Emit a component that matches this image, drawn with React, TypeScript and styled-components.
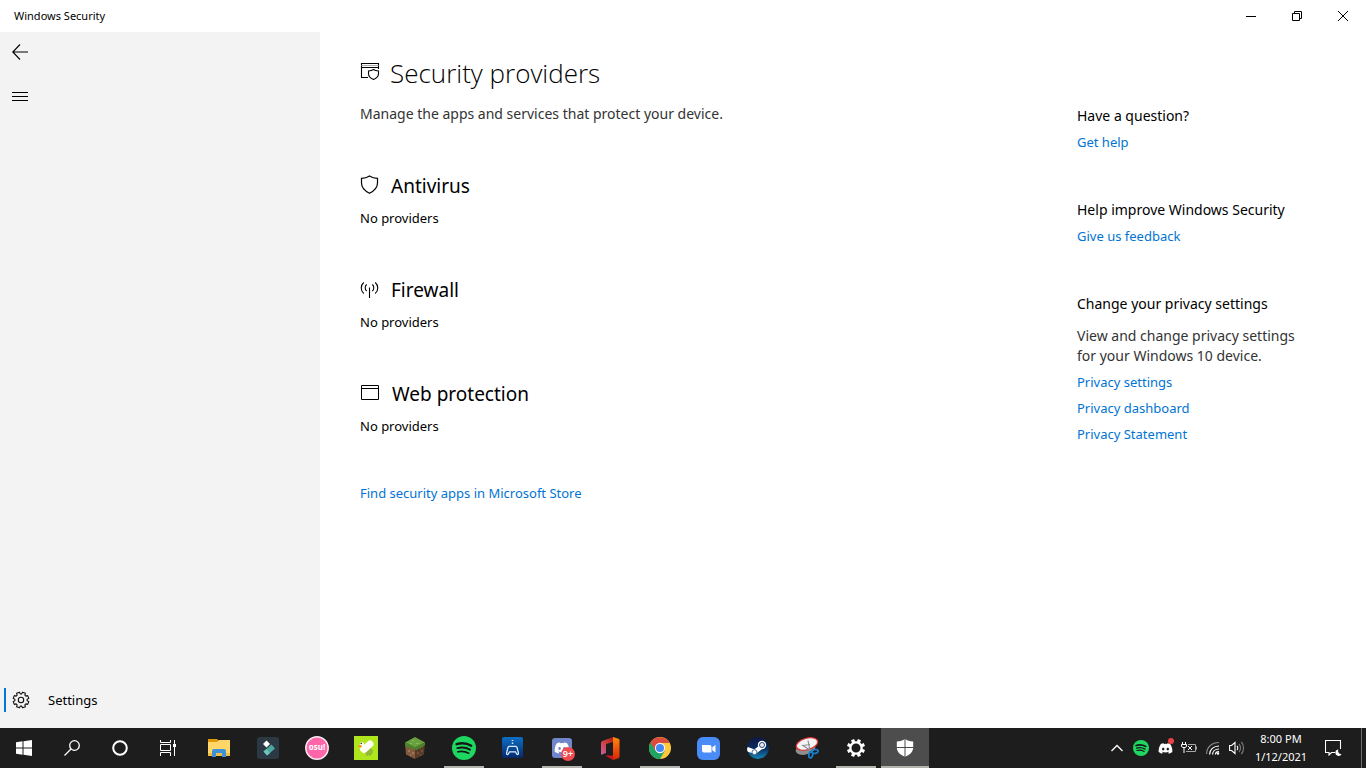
import React from "react";
import styled, { createGlobalStyle } from "styled-components";
import { FaDiscord } from "react-icons/fa";

const Global = createGlobalStyle`
  * { box-sizing: border-box; }
  body { margin: 0; background: #fff; font-family: "Noto Sans", "Open Sans", sans-serif; color: #000; }
  h1, h2, h3, p { margin: 0; font-weight: 400; }
  button { border: 0; padding: 0; background: none; color: inherit; font: inherit; cursor: pointer; }
  svg { display: block; flex: none; }
`;

const Page = styled.div`
  min-height: 100vh;
  display: flex;
  flex-direction: column;
`;
const TitleBar = styled.header`
  height: 32px;
  display: flex;
  align-items: center;
  justify-content: space-between;
  padding-left: 14px;
  font-size: 11px;
  line-height: 16px;
`;
const WindowControls = styled.div`
  display: flex;
`;
const WindowButton = styled.button`
  width: 46px;
  height: 32px;
  display: grid;
  place-items: center;
`;
const Body = styled.div`
  flex: 1;
  display: flex;
`;
const Sidebar = styled.nav`
  width: 320px;
  flex: none;
  background: #f3f3f3;
  display: flex;
  flex-direction: column;
  gap: 4px;
  padding-bottom: 8px;
`;
const NavButton = styled.button`
  width: 40px;
  height: 40px;
  display: grid;
  place-items: center;
`;
const SettingsButton = styled.button`
  margin-top: auto;
  height: 40px;
  padding-left: 4px;
  display: flex;
  align-items: center;
  font-size: 13px;
  line-height: 20px;
`;
const Indicator = styled.span`
  width: 2px;
  height: 24px;
  background: #0078d7;
  margin-right: 6px;
`;
const SettingsLabel = styled.span`
  margin-left: 18px;
`;
const Main = styled.main`
  flex: 1;
  padding: 20px 40px 40px;
`;
const PageTitle = styled.h1`
  display: flex;
  align-items: center;
  gap: 10px;
  font-family: "Open Sans", "Noto Sans", sans-serif;
  font-size: 26px;
  font-weight: 300;
  line-height: 42px;
`;
const Intro = styled.p`
  margin-top: 10px;
  font-size: 14px;
  line-height: 20px;
  color: #333;
`;
const Provider = styled.section`
  margin-top: 48px;
`;
const ProviderTitle = styled.h2`
  display: flex;
  align-items: center;
  gap: 12px;
  font-size: 19px;
  line-height: 28px;
`;
const ProviderStatus = styled.p`
  margin-top: 8px;
  font-size: 13px;
  line-height: 20px;
`;
const TextLink = styled.a`
  display: block;
  width: fit-content;
  color: #0074d4;
  font-size: 13px;
  line-height: 20px;
  text-decoration: none;
`;
const StoreRow = styled.div`
  margin-top: 47px;
`;
const Aside = styled.aside`
  width: 289px;
  flex: none;
  padding: 74px 40px 40px 0;
  display: flex;
  flex-direction: column;
  gap: 48px;
`;
const HelpGroup = styled.section`
  display: flex;
  flex-direction: column;
  gap: 6px;
`;
const HelpTitle = styled.h3`
  font-size: 14px;
  line-height: 20px;
`;
const HelpText = styled.p`
  padding-top: 6px;
  font-size: 14px;
  line-height: 20px;
  color: #333;
  white-space: nowrap;
`;
const Taskbar = styled.footer`
  height: 40px;
  background: #1d1d1d;
  color: #fff;
  display: flex;
  justify-content: space-between;
`;
const TaskGroup = styled.div`
  display: flex;
`;
const AppGroup = styled.div`
  display: flex;
  gap: 1px;
  margin-left: 3px;
`;
const TaskButton = styled.button<{ $running?: boolean; $active?: boolean }>`
  width: 48px;
  height: 40px;
  display: grid;
  place-items: center;
  background-color: ${(p) => (p.$active ? "#4d4d4d" : "transparent")};
  background-image: ${(p) => (p.$running || p.$active ? "linear-gradient(#b5b3ae, #b5b3ae)" : "none")};
  background-repeat: no-repeat;
  background-position: center bottom;
  background-size: ${(p) => (p.$active ? "48px 2px" : "40px 2px")};
`;
const BadgeHost = styled.span`
  position: relative;
  display: block;
`;
const CountBadge = styled.span`
  position: absolute;
  left: 9px;
  top: 9px;
  width: 14px;
  height: 14px;
  border-radius: 50%;
  background: #f04b4f;
  font-size: 9px;
  font-weight: 600;
  line-height: 14px;
  text-align: center;
`;
const DotBadge = styled.span`
  position: absolute;
  right: -1px;
  top: -3px;
  width: 6px;
  height: 6px;
  border-radius: 50%;
  background: #ee4245;
`;
const DiscordTile = styled.span`
  display: grid;
  place-items: center;
  width: 20px;
  height: 20px;
  border-radius: 3px;
  background: #7187cb;
`;
const TrayButton = styled.button`
  width: 24px;
  height: 40px;
  display: grid;
  place-items: center;
`;
const Clock = styled.time`
  width: 64px;
  display: flex;
  flex-direction: column;
  justify-content: center;
  text-align: center;
  font-size: 11px;
  line-height: 18px;
  white-space: nowrap;
`;
const ActionButton = styled.button`
  width: 42px;
  height: 40px;
  display: grid;
  place-items: center;
`;
const ShowDesktop = styled.button`
  width: 5px;
  margin-left: 6px;
  border-left: 1px solid #6d6d6d;
`;

const gearPath = (cx: number, cy: number, outer: number, inner: number, wide: number, narrow: number) => {
  const points: string[] = [];
  for (let i = 0; i < 8; i++) {
    const a = ((i + 0.5) * Math.PI) / 4;
    [[inner, -wide], [outer, -narrow], [outer, narrow], [inner, wide]].forEach(([r, d]) => {
      points.push(`${(cx + r * Math.cos(a + d)).toFixed(2)} ${(cy + r * Math.sin(a + d)).toFixed(2)}`);
    });
  }
  return `M${points.join("L")}Z`;
};

const Spotify = ({ size }: { size: number }) => (
  <svg width={size} height={size} viewBox="0 0 24 24" fill="none" stroke="#161616" strokeLinecap="round">
    <circle cx="12" cy="12" r="12" fill="#1ed760" stroke="none" />
    <path d="M4.6 8.2c5-1.5 10.500-.9 14.600 1.500" strokeWidth="2.400" />
    <path d="M5.300 12.100c4.300-1.200 9-.7 12.700 1.500" strokeWidth="2" />
    <path d="M5.900 15.800c3.800-1 7.500-.5 10.800 1.400" strokeWidth="1.700" />
  </svg>
);

const explorer = (
  <svg width="22" height="18" viewBox="0 0 22 18">
    <path d="M0 0h9l2 2v3H0z" fill="#e09a0c" />
    <path d="M0 3h9l2-2h11v16H0z" fill="#ffd667" />
    <path d="M0 14h22v3H0z" fill="#f3bd43" />
    <path d="M4 18v-6a2 2 0 0 1 2-2h10a2 2 0 0 1 2 2v6h-4v-4H8v4z" fill="#3d92d8" />
  </svg>
);
const filmora = (
  <svg width="22" height="22" viewBox="0 0 22 22">
    <rect width="22" height="22" rx="3" fill="#2c3844" />
    <path d="M9.500 3.500l3.500 3.500-3.500 3.500L6 7z" fill="#fff" />
    <path d="M6.500 14.500l8-7 3.500 4-8 7z" fill="#4aa8a0" />
    <path d="M6.500 14.500l3-2.500 3.500 4-3 2.500z" fill="#6cc4bb" />
  </svg>
);
const osu = (
  <svg width="24" height="24" viewBox="0 0 24 24">
    <circle cx="12" cy="12" r="11.200" fill="#ff66aa" stroke="#f7e8f0" strokeWidth="1.500" />
    <text x="12" y="14" textAnchor="middle" fontFamily="Noto Sans" fontSize="8" fontWeight="700" fill="#fff">osu!</text>
  </svg>
);
const duck = (
  <svg width="24" height="24" viewBox="0 0 24 24">
    <rect width="24" height="24" fill="#aee51c" />
    <ellipse cx="15" cy="15.500" rx="4" ry="3.500" fill="#93ba34" />
    <path d="M13 18v2M16 18v2" stroke="#879e45" />
    <path d="M8 8.500v4" stroke="#fffef5" strokeWidth="4.500" strokeLinecap="round" />
    <path d="M10 13.500l6-5.500" stroke="#fffef5" strokeWidth="7" strokeLinecap="round" />
    <path d="M4 9.500l3-.5 1 1.500-2 1.500z" fill="#ff8b13" />
    <circle cx="7.300" cy="7.500" r=".8" fill="#333" />
  </svg>
);
const grass = (
  <svg width="22" height="22" viewBox="0 0 22 22">
    <path d="M1 5.500l10 5V22L2 17.500z" fill="#815a3d" />
    <path d="M21 5.500l-10 5V22l9-4.500z" fill="#593b29" />
    <path d="M1 5.500L11 0l10 5.500-10 5z" fill="#68a23f" />
    <path d="M1 5.500l10 5 10-5V8l-2 1v1.500l-2-.5v2l-2-1-2 2-2-.5-2-1-2 .5-2-2-2 .5-2-1.500z" fill="#4e832b" />
    <path d="M4 13h2v2H4zm4 2h2v2H8zM6 17h1v2H6z" fill="#a27752" />
    <path d="M13 15h2v2h-2zm4-2h2v2h-2zm-1 4h1v2h-1z" fill="#735039" />
    <path d="M8 3h2v1H8zm4 3h3v1h-3zM6 6h2v1H6z" fill="#8abb59" />
  </svg>
);
const gamePad = (
  <svg width="22" height="22" viewBox="0 0 22 22">
    <defs>
      <linearGradient id="padBg" x1="0" y1="0" x2="0" y2="1">
        <stop offset="0" stopColor="#0d70c4" />
        <stop offset="1" stopColor="#06276c" />
      </linearGradient>
    </defs>
    <rect width="21" height="21" rx="2" fill="url(#padBg)" />
    <path d="M10.500 3v1M10.500 5.500v1.500" stroke="#d7edff" strokeWidth="1.500" />
    <path d="M7 9.300h7l1 1 1.500 6c0 1.500-1.500 1.500-2 .5l-1-2h-6l-1 2c-.5 1-2 1-2-.5l1.500-6z" fill="none" stroke="#d7edff" strokeWidth="1.300" />
  </svg>
);
const office = (
  <svg width="20" height="23" viewBox="0 0 20 23">
    <defs>
      <linearGradient id="officeL" x1="1" y1="0" x2="0" y2="1">
        <stop offset="0" stopColor="#a51c12" />
        <stop offset=".5" stopColor="#d4403f" />
        <stop offset="1" stopColor="#b765a8" />
      </linearGradient>
      <linearGradient id="officeR" x1="0" y1="0" x2="0" y2="1">
        <stop offset="0" stopColor="#ff8b0e" />
        <stop offset=".6" stopColor="#eb4a0b" />
        <stop offset="1" stopColor="#d52706" />
      </linearGradient>
    </defs>
    <path d="M12 0L1.500 4Q0 4.600 0 6v11q0 1 1.200.6L5 16V7l7-2z" fill="url(#officeL)" />
    <path d="M12 0l5.500 1.700Q18.500 2 18.500 3v17q0 1-1 1.300L12 23z" fill="url(#officeR)" />
    <path d="M4 18.500h8V23z" fill="#c81720" />
  </svg>
);
const chrome = (
  <svg width="22" height="22" viewBox="0 0 24 24">
    <circle cx="12" cy="12" r="12" fill="#fbca3c" />
    <path d="M12 12L1.600 6A12 12 0 0 0 12 24l5.200-9z" fill="#1da362" />
    <path d="M12 12l-5.200 3L1.600 6A12 12 0 0 1 22.400 6.500H12z" fill="#dd4b3e" />
    <circle cx="12" cy="12" r="5.600" fill="#f6f6f6" />
    <circle cx="12" cy="12" r="4.400" fill="#4587f3" />
  </svg>
);
const zoomApp = (
  <svg width="24" height="23" viewBox="0 0 24 23">
    <rect width="23" height="23" rx="6" fill="#4a8cf7" />
    <path d="M5 8h7.500a2 2 0 0 1 2 2v5.500H7a2 2 0 0 1-2-2zM15.300 10.300L18.500 8v7.500l-3.200-2.300z" fill="#fff" />
  </svg>
);
const steam = (
  <svg width="22" height="22" viewBox="0 0 22 22">
    <defs>
      <linearGradient id="steamBg" x1="0" y1="0" x2="0" y2="1">
        <stop offset="0" stopColor="#101744" />
        <stop offset=".5" stopColor="#0b2b5b" />
        <stop offset="1" stopColor="#1387b8" />
      </linearGradient>
      <clipPath id="steamClip"><circle cx="11" cy="11" r="11" /></clipPath>
    </defs>
    <g clipPath="url(#steamClip)">
      <circle cx="11" cy="11" r="11" fill="url(#steamBg)" />
      <path d="M0 12l7 2.500M7.500 15l6-4.500" stroke="#fff" strokeWidth="4.500" />
      <circle cx="7.500" cy="15.200" r="2.500" fill="#fff" stroke="#2c5079" strokeWidth=".8" />
      <circle cx="15" cy="8" r="4.200" fill="#fff" />
      <circle cx="15" cy="8" r="2.500" fill="#e8edf5" stroke="#2c4878" strokeWidth="1" />
    </g>
  </svg>
);
const snip = (
  <svg width="24" height="22" viewBox="0 0 24 22">
    <ellipse cx="10.500" cy="12" rx="10" ry="5.500" transform="rotate(-14 10.500 12)" fill="#8e8e8e" />
    <ellipse cx="12" cy="7" rx="11" ry="5.700" transform="rotate(-16 12 7)" fill="#f4f4f4" stroke="#df3535" strokeWidth="1.200" />
    <path d="M7 8l8 5M13 3.500l2 10M8 8.500l7-1" stroke="#8a8f95" strokeWidth="1.200" fill="none" />
    <ellipse cx="20" cy="14.500" rx="3.200" ry="1.900" transform="rotate(-10 20 14.500)" fill="none" stroke="#1781ce" strokeWidth="1.700" />
    <ellipse cx="15.800" cy="17.800" rx="1.900" ry="3.200" transform="rotate(12 15.800 17.800)" fill="none" stroke="#1781ce" strokeWidth="1.700" />
  </svg>
);
const gearWhite = (
  <svg width="18" height="18" viewBox="0 0 18 18" fill="#fff">
    <path fillRule="evenodd" d={`${gearPath(9, 9, 9.200, 6.800, 0.25, 0.18)}M9 4.500a4.500 4.500 0 1 0 0 9a4.500 4.500 0 1 0 0-9Z`} />
  </svg>
);
const defender = (
  <svg width="18" height="18" viewBox="0 0 18 18">
    <path d="M9 0c2 1.600 5 2.300 8.200 2.400v6.100c0 4.500-3.700 7.500-8.200 9.300C4.500 16 .8 13 .8 8.500V2.400C4 2.300 7 1.600 9 0z" fill="#fff" />
    <path d="M9 0v18M0 8.500h18" stroke="#4d4d4d" />
  </svg>
);

const apps = [
  { name: "File Explorer", icon: explorer },
  { name: "Filmora", icon: filmora },
  { name: "osu!", icon: osu },
  { name: "Goose", icon: duck },
  { name: "Minecraft", icon: grass },
  { name: "Spotify", icon: <Spotify size={24} />, running: true },
  { name: "Gamepad", icon: gamePad },
  {
    name: "Discord",
    running: true,
    icon: (
      <BadgeHost>
        <DiscordTile><FaDiscord size={16} /></DiscordTile>
        <CountBadge>9+</CountBadge>
      </BadgeHost>
    ),
  },
  { name: "Office", icon: office },
  { name: "Chrome", icon: chrome, running: true },
  { name: "Zoom", icon: zoomApp },
  { name: "Steam", icon: steam },
  { name: "Snipping Tool", icon: snip },
  { name: "Settings", icon: gearWhite, running: true },
  { name: "Windows Security", icon: defender, active: true },
];

const providers = [
  {
    title: "Antivirus",
    icon: (
      <svg width="19" height="22" viewBox="0 0 19 22" fill="none" stroke="#000" strokeWidth="1.200">
        <path d="M9.500 1C12 2.600 14.500 3.300 17.500 3.400V8c0 5-3.500 8-8 10.300C5 16 1.500 13 1.500 8V3.400C4.500 3.300 7 2.600 9.500 1z" />
      </svg>
    ),
  },
  {
    title: "Firewall",
    icon: (
      <svg width="19" height="18" viewBox="0 0 19 18" fill="none" stroke="#000" strokeWidth="1.100">
        <path d="M9.500 6.500V17M6.700 3.500c-2 1.500-2 5 0 6.500M12.300 3.500c2 1.500 2 5 0 6.500M3.800 1.500c-3.400 2.700-3.400 8.300 0 11M15.200 1.500c3.400 2.700 3.400 8.300 0 11" />
      </svg>
    ),
  },
  {
    title: "Web protection",
    icon: (
      <svg width="20" height="20" viewBox="0 0 20 20" fill="none" stroke="#000">
        <path d="M1.500 1.500h17v14h-17zM1.500 4.500h17" />
      </svg>
    ),
  },
];

export default function App() {
  return (
    <Page>
      <Global />
      <TitleBar>
        <span>Windows Security</span>
        <WindowControls>
          <WindowButton aria-label="Minimize">
            <svg width="10" height="10" stroke="#000"><path d="M0 5.500h10" /></svg>
          </WindowButton>
          <WindowButton aria-label="Restore">
            <svg width="10" height="10" fill="none" stroke="#000"><path d="M.5 2.500h7v7h-7zM2.500 2.500v-2h7v7h-2" /></svg>
          </WindowButton>
          <WindowButton aria-label="Close">
            <svg width="10" height="10" stroke="#000"><path d="M0 0l10 10M10 0L0 10" /></svg>
          </WindowButton>
        </WindowControls>
      </TitleBar>
      <Body>
        <Sidebar>
          <NavButton aria-label="Back">
            <svg width="16" height="16" fill="none" stroke="#000" strokeWidth="1.100"><path d="M1 8h15M8 .5L.8 8 8 15.500" /></svg>
          </NavButton>
          <NavButton aria-label="Menu">
            <svg width="16" height="10" stroke="#000"><path d="M0 1.500h16M0 5.500h16M0 9.500h16" /></svg>
          </NavButton>
          <SettingsButton>
            <Indicator />
            <svg width="18" height="18" viewBox="0 0 18 18" fill="none" stroke="#111" strokeWidth="1.100">
              <path d={gearPath(9, 9, 8, 6.200, 0.28, 0.19)} strokeLinejoin="round" />
              <circle cx="9" cy="9" r="2.700" />
            </svg>
            <SettingsLabel>Settings</SettingsLabel>
          </SettingsButton>
        </Sidebar>
        <Main>
          <PageTitle>
            <svg width="20" height="22" viewBox="0 0 20 22" fill="none" stroke="#000" strokeWidth="1.100">
              <path d="M8 15.500H1.500v-14h17V7M1.500 5.500h17" />
              <path d="M1.500 3.500h17" stroke="#aaa" />
              <path d="M13.500 7.500c1.500 1 3 1.400 5 1.500v2.500c0 3-2 4.800-5 6-3-1.200-5-3-5-6V9c2-.1 3.500-.5 5-1.500z" />
            </svg>
            Security providers
          </PageTitle>
          <Intro>Manage the apps and services that protect your device.</Intro>
          {providers.map((p) => (
            <Provider key={p.title}>
              <ProviderTitle>{p.icon}{p.title}</ProviderTitle>
              <ProviderStatus>No providers</ProviderStatus>
            </Provider>
          ))}
          <StoreRow>
            <TextLink href="#store">Find security apps in Microsoft Store</TextLink>
          </StoreRow>
        </Main>
        <Aside>
          <HelpGroup>
            <HelpTitle>Have a question?</HelpTitle>
            <TextLink href="#help">Get help</TextLink>
          </HelpGroup>
          <HelpGroup>
            <HelpTitle>Help improve Windows Security</HelpTitle>
            <TextLink href="#feedback">Give us feedback</TextLink>
          </HelpGroup>
          <HelpGroup>
            <HelpTitle>Change your privacy settings</HelpTitle>
            <HelpText>View and change privacy settings<br />for your Windows 10 device.</HelpText>
            <TextLink href="#privacy">Privacy settings</TextLink>
            <TextLink href="#dashboard">Privacy dashboard</TextLink>
            <TextLink href="#statement">Privacy Statement</TextLink>
          </HelpGroup>
        </Aside>
      </Body>
      <Taskbar>
        <TaskGroup>
          <TaskButton aria-label="Start">
            <svg width="16" height="16" fill="#fff"><path d="M0 2.300L6.500 1.300V7.500H0zM7.500 1.200L16 0v7.500H7.500zM0 8.500h6.500v6.200L0 13.700zM7.500 8.500H16V16l-8.500-1.200z" /></svg>
          </TaskButton>
          <TaskButton aria-label="Search">
            <svg width="16" height="16" fill="none" stroke="#fff" strokeWidth="1.300"><circle cx="10.500" cy="5.500" r="4.800" /><path d="M7 9L.5 15.500" /></svg>
          </TaskButton>
          <TaskButton aria-label="Cortana">
            <svg width="16" height="16" fill="none" stroke="#fff" strokeWidth="2"><circle cx="8" cy="8" r="6.800" /></svg>
          </TaskButton>
          <TaskButton aria-label="Task View">
            <svg width="16" height="16" fill="none" stroke="#fff">
              <path d="M.5 0v2.500h10V0M.5 4.500h10v6H.5zM.5 16v-3.500h10V16M14.500 0v16" />
              <path d="M13 4h3v3h-3z" fill="#fff" stroke="none" />
            </svg>
          </TaskButton>
          <AppGroup>
            {apps.map((a) => (
              <TaskButton key={a.name} aria-label={a.name} $running={a.running} $active={a.active}>{a.icon}</TaskButton>
            ))}
          </AppGroup>
        </TaskGroup>
        <TaskGroup>
          <TrayButton aria-label="Show hidden icons">
            <svg width="12" height="8" fill="none" stroke="#fff" strokeWidth="1.300"><path d="M.5 7L6 1.500 11.500 7" /></svg>
          </TrayButton>
          <TrayButton aria-label="Spotify"><Spotify size={16} /></TrayButton>
          <TrayButton aria-label="Discord">
            <BadgeHost><FaDiscord size={15} /><DotBadge /></BadgeHost>
          </TrayButton>
          <TrayButton aria-label="Battery">
            <svg width="16" height="12" fill="none" stroke="#fff">
              <path d="M1.500 0v2M4.500 0v2M.5 2.500h5v2l-1.500 1H2l-1.500-1zM3 5.500V11" />
              <path d="M7 2.500h7.500v7H5M15.500 4.500v3" stroke="#a8a8a8" />
              <path d="M7 4l4 4M11 4L7 8" />
            </svg>
          </TrayButton>
          <TrayButton aria-label="Wi-Fi">
            <svg width="14" height="14" fill="none" stroke="#fff" strokeWidth="1.200">
              <path d="M.6 13C.6 6 6 1.500 13 1.500" stroke="#8c8c8c" />
              <path d="M3.600 13.500c0-5 4-8.500 9.400-8.500M6.600 13.500C6.600 10.500 9 8 13 8M9.500 13.500c0-1.500 1.500-2.800 3.500-2.800" />
              <circle cx="12" cy="12.500" r="1.200" fill="#fff" stroke="none" />
            </svg>
          </TrayButton>
          <TrayButton aria-label="Volume">
            <svg width="16" height="14" fill="none" stroke="#fff" strokeWidth="1.100">
              <path d="M.6 4.500h2L6 1.500v11L2.600 9.500h-2zM8 5c1 1 1 3 0 4" />
              <path d="M10 3c2 2 2 6 0 8M12.300 1c3 3 3 9 0 12" stroke="#7e7e7e" />
            </svg>
          </TrayButton>
          <Clock><span>8:00 PM</span><span>1/12/2021</span></Clock>
          <ActionButton aria-label="Notifications">
            <svg width="18" height="16" fill="none" stroke="#fff" strokeWidth="1.100">
              <path d="M10 12.500H6.500L4 15v-2.500H.5V.5h15V9" />
              <path d="M13.500 9.500a3.200 3.200 0 1 0 3 4.500 3 3 0 0 1-3-4.500z" fill="#fff" stroke="none" />
            </svg>
          </ActionButton>
          <ShowDesktop aria-label="Show desktop" />
        </TaskGroup>
      </Taskbar>
    </Page>
  );
}
